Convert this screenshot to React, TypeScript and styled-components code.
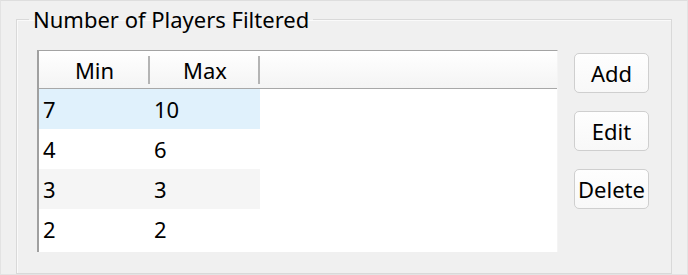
import React from "react";
import styled, { createGlobalStyle } from "styled-components";

const Global = createGlobalStyle`
  html, body { margin: 0; padding: 0; background: #f0f0f0; }
  body { font-family: "Noto Sans", "Open Sans", sans-serif; color: #000; }
  * { box-sizing: border-box; }
`;

const Frame = styled.div`
  width: 688px;
  height: 275px;
  border: 1px solid #e3e3e3;
  border-top-color: #dedede;
  padding: 4px 15px 0 15px;
  background: #f0f0f0;
`;

const Group = styled.fieldset`
  margin: 0;
  padding: 0 0 0 12px;
  height: 269px;
  border: 1px solid #d9d9d9;
  box-shadow: inset 1px 1px 0 #fafafa;
  min-width: 0;
`;

const Legend = styled.legend`
  font-size: 22px;
  line-height: 29px;
  padding: 0 4px;
  margin: 0;
  color: #000;
`;

const Body = styled.div`
  display: flex;
  align-items: flex-start;
  gap: 16px;
  margin-top: 16px;
  padding-left: 8px;
`;

const List = styled.div`
  width: 521px;
  height: 202px;
  background: #fff;
  border-top: 1px solid #a3a3a3;
  border-left: 2px solid #a0a0a0;
  border-right: 1px solid #f4f4f4;
  display: flex;
  flex-direction: column;
`;

const Header = styled.div`
  display: flex;
  height: 38px;
  background: linear-gradient(#ffffff, #f4f4f4);
  border-bottom: 1px solid #a8a8a8;
  align-items: center;
`;

const HeadCell = styled.div<{ $w: number }>`
  width: ${(p) => p.$w}px;
  flex: none;
  text-align: center;
  font-size: 22px;
  line-height: 30px;
  position: relative;
  &::after {
    content: "";
    position: absolute;
    right: 0;
    top: 1px;
    bottom: 1px;
    width: 2px;
    background: #b4b4b4;
  }
`;

const Row = styled.div`
  display: flex;
  height: 40px;
  align-items: center;
`;

const Cell = styled.div<{ $w: number; $bg: string }>`
  width: ${(p) => p.$w}px;
  height: 100%;
  flex: none;
  display: flex;
  align-items: center;
  padding-left: 4px;
  font-size: 22px;
  background: ${(p) => p.$bg};
`;

const Buttons = styled.div`
  display: flex;
  flex-direction: column;
  gap: 18px;
  margin-top: 3px;
`;

const Button = styled.button`
  width: 75px;
  height: 40px;
  border: 1px solid #cfcfcf;
  border-radius: 5px;
  background: linear-gradient(#fefefe, #f8f8f8);
  font-family: inherit;
  font-size: 22px;
  color: #000;
  padding: 0;
`;

const rows: [string, string][] = [
  ["7", "10"],
  ["4", "6"],
  ["3", "3"],
  ["2", "2"],
];

const bgFor = (i: number) => (i === 0 ? "#e0f1fc" : i === 2 ? "#f5f5f5" : "#ffffff");

export default function App() {
  return (
    <>
      <Global />
      <Frame>
        <Group>
          <Legend>Number of Players Filtered</Legend>
          <Body>
            <List>
              <Header>
                <HeadCell $w={111}>Min</HeadCell>
                <HeadCell $w={110}>Max</HeadCell>
              </Header>
              {rows.map(([a, b], i) => (
                <Row key={i}>
                  <Cell $w={111} $bg={bgFor(i)}>{a}</Cell>
                  <Cell $w={110} $bg={bgFor(i)}>{b}</Cell>
                </Row>
              ))}
            </List>
            <Buttons>
              <Button>Add</Button>
              <Button>Edit</Button>
              <Button>Delete</Button>
            </Buttons>
          </Body>
        </Group>
      </Frame>
    </>
  );
}
